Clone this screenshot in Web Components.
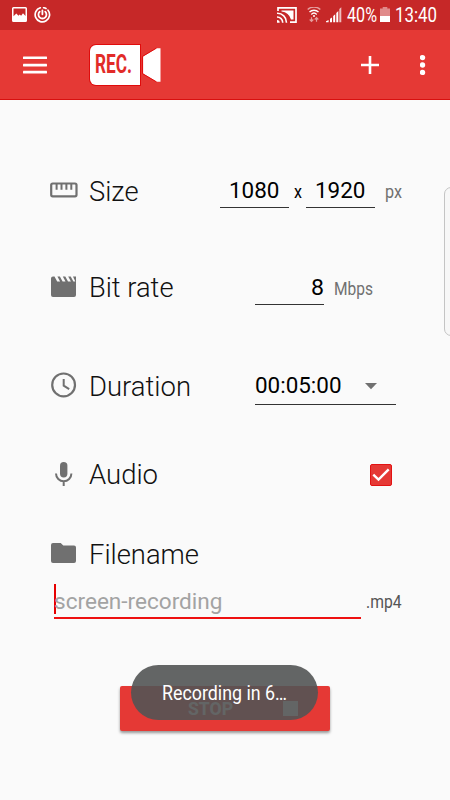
<!DOCTYPE html>
<html lang="en">
<head>
<meta charset="utf-8">
<title>Screen recorder</title>
<style>
  html, body {
    margin: 0;
    height: 100%;
  }
  body {
    font-family: Roboto, "Noto Sans", sans-serif;
    background: #fafafa;
    overflow: hidden;
  }
</style>
</head>
<body>
<recorder-app></recorder-app>

<script>
// One line of text squeezed to a set width, with its capitals centred in the box
class FitText extends HTMLElement {
  constructor() {
    super();
    this.attachShadow({ mode: 'open' });
  }

  connectedCallback() {
    const size = parseFloat(this.getAttribute('size'));
    const width = parseFloat(this.getAttribute('width'));
    const dy = parseFloat(this.getAttribute('dy') || 0);
    const weight = this.getAttribute('weight') || 400;
    const height = Math.round(size / 2) * 2;
    this.shadowRoot.innerHTML = `
      <style>
        :host { display: block; flex: none; width: ${width}px; height: ${height}px; }
        svg { display: block; overflow: visible; }
        text { font-size: ${size}px; font-weight: ${weight}; fill: currentColor; }
      </style>
      <svg width="${width}" height="${height}">
        <text x="0" y="${height / 2 + size * 0.355 + dy}" textLength="${width}" lengthAdjust="spacingAndGlyphs"></text>
      </svg>
    `;
    this.shadowRoot.querySelector('text').textContent = this.getAttribute('text');
  }
}
customElements.define('fit-text', FitText);

class StatusBar extends HTMLElement {
  constructor() {
    super();
    this.attachShadow({ mode: 'open' });
    this.shadowRoot.innerHTML = `
      <style>
        :host {
          display: flex;
          align-items: center;
          box-sizing: border-box;
          height: 30px;
          padding: 0 13px 0 12px;
          background: #c62828;
          color: #fff;
        }
        svg { display: block; flex: none; }
        .left, .right { display: flex; align-items: center; }
        .left { gap: 7px; flex: 1; }
        .cast { margin-right: 10px; }
        .wifi { margin-right: 5px; }
        .signal { margin-right: 5px; }
        .battery { margin: 0 5px 0 3px; }
      </style>
      <div class="left">
        <svg width="15" height="16" viewBox="0 0 15 16">
          <path fill="#fff" fill-rule="evenodd" d="M1.5 0h12a1.500 1.500 0 0 1 1.500 1.500v12a1.500 1.500 0 0 1-1.500 1.500h-12A1.500 1.500 0 0 1 0 13.500V1.500A1.500 1.500 0 0 1 1.500 0zM1.500 1.600v7.600L4.300 6.600l2.200 2.200 1.200-1.200 1.400 1.200L11 6.300l2.500 2.700V1.600z"/>
        </svg>
        <svg width="17" height="16" viewBox="0 0 17 16" fill="none" stroke="#fff" stroke-linecap="round">
          <path stroke-width="1.700" d="M6.300 .8A7.200 7.200 0 1 0 14 3.200"/>
          <path stroke-width="1.700" d="M9.600 .7A7.200 7.200 0 0 1 12 1.600"/>
          <path stroke-width="1.800" d="M5.700 4.600A4 4 0 1 0 11.200 4.600M8.400 3.300v4"/>
        </svg>
      </div>
      <div class="right">
        <svg class="cast" width="20" height="16" viewBox="0 0 20 16">
          <path fill="none" stroke="#fff" stroke-width="1.700" d="M1 4V.9h18v14.200h-6"/>
          <path fill="#fff" d="M4.500 3.600h12v8.900h-2.500A11 11 0 0 0 4.500 4.500z"/>
          <path fill="none" stroke="#fff" stroke-width="1.600" d="M0 6.300a9 9 0 0 1 9.400 9.400M0 10a5.600 5.600 0 0 1 5.700 5.700"/>
          <path fill="#fff" d="M0 13a2.700 2.700 0 0 1 2.700 2.700H0z"/>
        </svg>
        <svg class="wifi" width="14" height="16" viewBox="0 0 14 16" fill="none" stroke="#fff" stroke-width="1.400">
          <path opacity=".55" d="M.7 2.600a9 9 0 0 1 12.600 0"/>
          <path d="M2.500 5.100a6.400 6.400 0 0 1 9 0M4.300 7.400a3.900 3.900 0 0 1 5.400 0"/>
          <circle cx="7" cy="9" r="1" fill="#fff" stroke="none"/>
          <path opacity=".55" stroke-width="1.200" d="M4.500 10.300v4M2.700 12.500l1.800 1.800 1.800-1.800M9.500 14.700v-4M7.700 12.500l1.800-1.800 1.800 1.800"/>
        </svg>
        <svg class="signal" width="16" height="16" viewBox="0 0 16 16" fill="#fff">
          <path d="M0 14.300l2.600-1.200v2.100H0zM4 11.800l2-1.400v4.800H4zM7.200 9l2-1.700v7.900h-2zM10.300 5.900l2-1.800v11.100h-2z"/>
          <path opacity=".7" d="M13.300 2.100l2-1.900v15h-2z"/>
        </svg>
        <fit-text text="40%" size="19.5" width="30" dy=".4"></fit-text>
        <svg class="battery" width="10" height="16" viewBox="0 0 10 16">
          <path fill="#e08a8a" d="M2.700 0h4.600v1.500H10V9H0V1.500h2.700z"/>
          <path fill="#fff" d="M0 9h10v6H0z"/>
        </svg>
        <fit-text text="13:40" size="19.5" width="42" dy=".4"></fit-text>
      </div>
    `;
  }
}
customElements.define('status-bar', StatusBar);

class AppBar extends HTMLElement {
  constructor() {
    super();
    this.attachShadow({ mode: 'open' });
    this.shadowRoot.innerHTML = `
      <style>
        :host {
          display: flex;
          align-items: center;
          box-sizing: border-box;
          height: 70px;
          padding: 0 24px 0 23px;
          background: #e53935;
          border-bottom: 1px solid #d8100f;
        }
        svg { display: block; flex: none; }
        .logo { display: flex; margin-left: 43px; flex: 1; }
        .badge {
          display: flex;
          align-items: center;
          box-sizing: border-box;
          width: 50px;
          height: 40px;
          padding-left: 5px;
          color: #e22b28;
          background: #fff;
          border-radius: 6px 0 0 6px;
          box-shadow: 0 0 0 1px #e00b0b;
        }
        .more { margin-left: 41px; }
      </style>
      <svg width="24" height="18" viewBox="0 0 24 18" fill="#fff">
        <rect y="0.500" width="24" height="2.600" rx=".4"/>
        <rect y="7.800" width="24" height="2.600" rx=".4"/>
        <rect y="14.800" width="24" height="2.600" rx=".4"/>
      </svg>
      <div class="logo">
        <div class="badge"><fit-text text="REC." size="25.500" width="37" weight="700" dy="-.6"></fit-text></div>
        <svg width="21" height="40" viewBox="0 0 21 40">
          <path fill="#fff" d="M3 11.500L16.500 3.300H20.500V36.700H16.500L3 28.500z"/>
          <path fill="none" stroke="#e00b0b" d="M16.500 36.900L2.600 28.700V11.300L16.500 3.100"/>
        </svg>
      </div>
      <svg width="18" height="18" viewBox="0 0 18 18" stroke="#fff" stroke-width="2.600">
        <path d="M9 0v18M0 9h18"/>
      </svg>
      <svg class="more" width="6" height="22" viewBox="0 0 6 22" fill="#fff">
        <circle cx="2.500" cy="3.600" r="2.700"/>
        <circle cx="2.500" cy="11" r="2.700"/>
        <circle cx="2.500" cy="18.400" r="2.700"/>
      </svg>
    `;
  }
}
customElements.define('app-bar', AppBar);

class SettingRow extends HTMLElement {
  constructor() {
    super();
    this.attachShadow({ mode: 'open' });
    this.shadowRoot.innerHTML = `
      <style>
        :host { display: flex; align-items: center; height: 60px; color: #111; }
        .icon { width: 30px; height: 30px; margin-right: 9.500px; flex: none; }
        .label { flex: 1; }
        .control { display: flex; align-items: center; color: #000; }
      </style>
      <div class="icon"><slot name="icon"></slot></div>
      <div class="label"><slot name="label"></slot></div>
      <div class="control"><slot></slot></div>
    `;
  }
}
customElements.define('setting-row', SettingRow);

class LineField extends HTMLElement {
  constructor() {
    super();
    this.attachShadow({ mode: 'open' });
    this.shadowRoot.innerHTML = `
      <style>
        :host {
          display: flex;
          align-items: center;
          justify-content: center;
          box-sizing: border-box;
          width: 69px;
          height: 36px;
          border-bottom: 1px solid #333;
        }
        :host([align="end"]) { justify-content: flex-end; }
        :host([align="start"]) { justify-content: flex-start; }
      </style>
      <slot></slot>
    `;
  }
}
customElements.define('line-field', LineField);

class CheckBox extends HTMLElement {
  constructor() {
    super();
    this.attachShadow({ mode: 'open' });
    this.shadowRoot.innerHTML = `
      <style>
        :host { display: block; }
        svg { display: block; }
      </style>
      <svg width="22" height="22" viewBox="0 0 22 22">
        <rect x=".5" y=".5" width="21" height="21" rx="1.500" fill="#e53935" stroke="#e31212"/>
        <path d="M3.300 10.600l5.200 5 10.200-10.200" fill="none" stroke="#fff" stroke-width="2.400"/>
      </svg>
    `;
  }
}
customElements.define('check-box', CheckBox);

class FileInput extends HTMLElement {
  constructor() {
    super();
    this.attachShadow({ mode: 'open' });
    this.shadowRoot.innerHTML = `
      <style>
        :host { display: flex; padding-left: 5px; height: 36px; color: #555; }
        .field {
          display: flex;
          align-items: flex-start;
          box-sizing: border-box;
          width: 307px;
          flex: none;
          padding-top: 1px;
          margin-right: 5px;
          border-bottom: 2px solid #ee1111;
          color: #a3a3a3;
        }
        .caret { width: 2px; height: 30px; margin-right: -2px; background: #e60000; }
        .hint { padding-top: 6px; }
        .suffix { padding-top: 10px; }
      </style>
      <div class="field">
        <div class="caret"></div>
        <div class="hint"><fit-text text="screen-recording" size="22.5" width="168.500" dy="-.4"></fit-text></div>
      </div>
      <div class="suffix"><fit-text text=".mp4" size="18" width="35.500" dy="0"></fit-text></div>
    `;
  }
}
customElements.define('file-input', FileInput);

class StopButton extends HTMLElement {
  constructor() {
    super();
    this.attachShadow({ mode: 'open' });
    this.shadowRoot.innerHTML = `
      <style>
        :host {
          display: flex;
          align-items: center;
          box-sizing: border-box;
          width: 210px;
          height: 45px;
          padding-left: 67.500px;
          color: #fff;
          background: #e53935;
          border-radius: 2px;
          box-shadow: 0 2px 3px rgba(0, 0, 0, .4);
        }
        .square { width: 15px; height: 15px; margin-left: 50px; background: #fff; }
      </style>
      <fit-text text="STOP" size="17.5" width="45" weight="700"></fit-text>
      <div class="square"></div>
    `;
  }
}
customElements.define('stop-button', StopButton);

class ToastMessage extends HTMLElement {
  constructor() {
    super();
    this.attachShadow({ mode: 'open' });
    this.shadowRoot.innerHTML = `
      <style>
        :host {
          position: absolute;
          left: 131px;
          top: 665px;
          display: flex;
          align-items: center;
          justify-content: center;
          width: 187px;
          height: 55px;
          color: #fff;
          background: rgba(82, 84, 84, .9);
          border-radius: 28px;
        }
      </style>
      <slot></slot>
    `;
  }
}
customElements.define('toast-message', ToastMessage);

class RecorderApp extends HTMLElement {
  constructor() {
    super();
    this.attachShadow({ mode: 'open' });
    this.shadowRoot.innerHTML = `
      <style>
        :host {
          display: block;
          position: relative;
          width: 450px;
          height: 800px;
          overflow: hidden;
        }
        main { display: flex; flex-direction: column; padding: 60px 48px 0 49px; }
        setting-row svg { display: block; }
        .bitrate { margin-top: 37px; }
        .duration { margin-top: 40px; }
        .audio { margin-top: 28px; }
        .filename { margin-top: 18px; }
        .times { margin: 0 4px 0 5px; }
        .unit { color: #707070; }
        .px { margin-left: 10px; }
        .mbps { margin: 0 29px 0 10px; }
        .time { width: 141px; margin-right: 6px; }
        .arrow { margin-left: 23.500px; }
        check-box { margin-right: 10px; }
        stop-button { margin: 67px 0 0 71px; }
        .handle {
          position: absolute;
          left: 444px;
          top: 187px;
          box-sizing: border-box;
          width: 20px;
          height: 149px;
          border: 1px solid #c4c4c4;
          border-radius: 7px;
          background: #f7f7f7;
        }
      </style>
      <status-bar></status-bar>
      <app-bar></app-bar>
      <main>
        <setting-row>
          <svg slot="icon" width="30" height="30" viewBox="0 0 30 30">
            <rect x="2.200" y="8.500" width="25.300" height="12.800" rx="1.500" fill="none" stroke="#707070" stroke-width="2.200"/>
            <path stroke="#707070" stroke-width="2" d="M7.600 9v5.800M12.500 9v5.800M17.400 9v5.800M22.300 9v5.800"/>
          </svg>
          <fit-text slot="label" text="Size" size="27" width="49.500" weight="300" dy="1.200"></fit-text>
          <line-field><fit-text text="1080" size="22.500" width="50.500" dy="0"></fit-text></line-field>
          <fit-text class="times" text="x" size="18" width="8" dy="2"></fit-text>
          <line-field><fit-text text="1920" size="22.500" width="50.500" dy="0"></fit-text></line-field>
          <fit-text class="unit px" text="px" size="18" width="17" dy="2"></fit-text>
        </setting-row>

        <setting-row class="bitrate">
          <svg slot="icon" width="30" height="30" viewBox="0 0 30 30">
            <path fill="#707070" d="M4 4.500h1.500l2.700 5.100h2.900L8.400 4.500h2.500l2.700 5.100h2.900l-2.700-5.100h2.500l2.700 5.100h2.900l-2.700-5.100h2.500l2.700 5.100h1.900L24 4.500h3V23a2 2 0 0 1-2 2H4a2 2 0 0 1-2-2V6.500a2 2 0 0 1 2-2z"/>
          </svg>
          <fit-text slot="label" text="Bit rate" size="27" width="84.500" weight="300" dy=".6"></fit-text>
          <line-field align="end"><fit-text text="8" size="22.500" width="13" dy="-.3"></fit-text></line-field>
          <fit-text class="unit mbps" text="Mbps" size="18" width="39" dy="2"></fit-text>
        </setting-row>

        <setting-row class="duration">
          <svg slot="icon" width="30" height="30" viewBox="0 0 30 30" fill="none" stroke="#707070">
            <circle cx="14.600" cy="12.900" r="11.400" stroke-width="2.200"/>
            <path stroke-width="2" d="M14.700 7v6.700l5.500 3.400"/>
          </svg>
          <fit-text slot="label" text="Duration" size="27" width="102" weight="300" dy="-.600"></fit-text>
          <line-field class="time" align="start">
            <fit-text text="00:05:00" size="22.500" width="86.500" dy="-1.800"></fit-text>
            <svg class="arrow" width="12" height="7" viewBox="0 0 12 7"><path fill="#707070" d="M0 0h12L6 6.300z"/></svg>
          </line-field>
        </setting-row>

        <setting-row class="audio">
          <svg slot="icon" width="30" height="30" viewBox="0 0 30 30">
            <rect x="11" y="2" width="7.400" height="15.500" rx="3.700" fill="#707070"/>
            <path fill="none" stroke="#707070" stroke-width="2" d="M7 13.500a7.700 7.700 0 0 0 15.400 0M14.700 21v5"/>
          </svg>
          <fit-text slot="label" text="Audio" size="27" width="69" weight="300" dy="-.200"></fit-text>
          <check-box></check-box>
        </setting-row>

        <setting-row class="filename">
          <svg slot="icon" width="30" height="30" viewBox="0 0 30 30">
            <path fill="#707070" d="M4 5h7.700l2.600 2.600H25a2 2 0 0 1 2 2V23a2 2 0 0 1-2 2H4a2 2 0 0 1-2-2V7a2 2 0 0 1 2-2z"/>
          </svg>
          <fit-text slot="label" text="Filename" size="27" width="110" weight="300" dy="1.200"></fit-text>
        </setting-row>
        <file-input></file-input>
        <stop-button></stop-button>
      </main>
      <div class="handle"></div>
      <toast-message><fit-text text="Recording in 6…" size="20" width="125" dy="-.5"></fit-text></toast-message>
    `;
  }
}
customElements.define('recorder-app', RecorderApp);
</script>
</body>
</html>
